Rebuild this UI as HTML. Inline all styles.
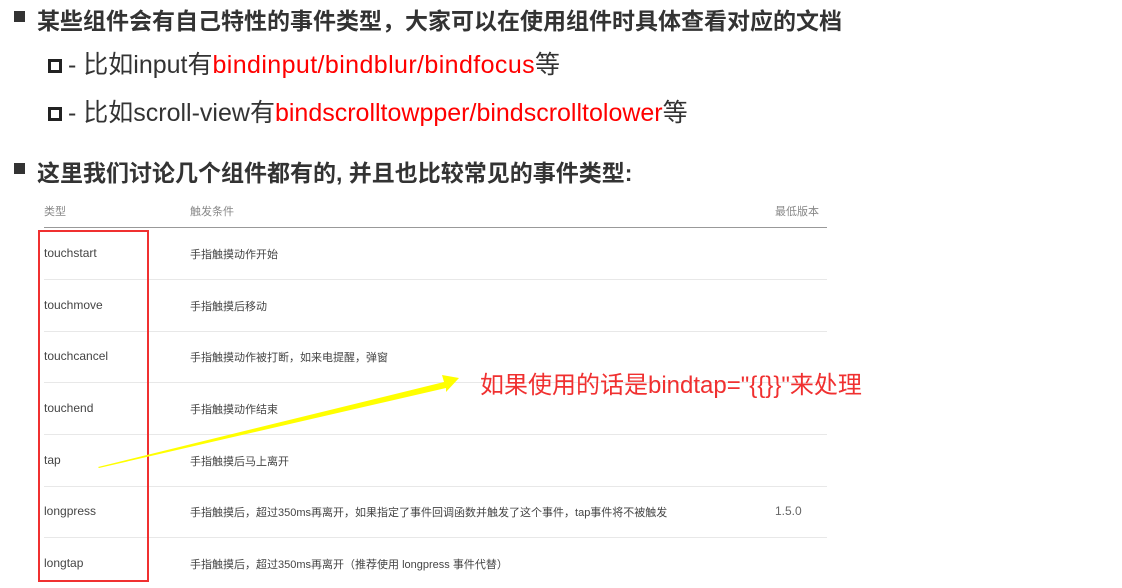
<!DOCTYPE html>
<html><head><meta charset="utf-8"><style>
body{margin:0;width:1122px;height:588px;background:#fff;position:relative;overflow:hidden;font-family:"Liberation Sans","Noto Sans CJK SC",sans-serif;}
.a{position:absolute;white-space:nowrap;}
.h{font-size:23px;font-weight:bold;color:#333;}
.sq{position:absolute;width:11px;height:11px;background:#333;}
.s{font-size:25px;color:#333;}
.r{color:#f00;}
.ob{display:inline-block;border:3px solid #222;vertical-align:0px;margin-right:6px;box-sizing:content-box;width:8px;height:8px;}
.t{font-size:12px;color:#444;}
.c{font-size:11px;color:#444;}
.th{font-size:11px;color:#888;}
.ln{position:absolute;left:44px;width:783px;height:1px;background:#e8e8e8;}
</style></head><body>
<div class="sq" style="left:14px;top:11px"></div>
<div class="a h" style="left:37px;top:2px">某些组件会有自己特性的事件类型，大家可以在使用组件时具体查看对应的文档</div>
<div class="a s" style="left:48px;top:45px"><span class="ob"></span>- 比如input有<span class="r" style="letter-spacing:0.4px">bindinput/bindblur/bindfocus</span>等</div>
<div class="a s" style="left:48px;top:93px"><span class="ob"></span>- 比如scroll-view有<span class="r">bindscrolltowpper/bindscrolltolower</span>等</div>
<div class="sq" style="left:14px;top:163px"></div>
<div class="a h" style="left:37px;top:154px">这里我们讨论几个组件都有的, 并且也比较常见的事件类型:</div>

<div class="a th" style="left:44px;top:203px">类型</div>
<div class="a th" style="left:190px;top:203px">触发条件</div>
<div class="a th" style="left:775px;top:203px">最低版本</div>
<div class="ln" style="top:227px;background:#999"></div>

<div class="a t" style="left:44px;top:246px">touchstart</div><div class="a c" style="left:190px;top:246px">手指触摸动作开始</div>
<div class="ln" style="top:279px"></div>
<div class="a t" style="left:44px;top:298px">touchmove</div><div class="a c" style="left:190px;top:298px">手指触摸后移动</div>
<div class="ln" style="top:331px"></div>
<div class="a t" style="left:44px;top:349px">touchcancel</div><div class="a c" style="left:190px;top:349px">手指触摸动作被打断，如来电提醒，弹窗</div>
<div class="ln" style="top:382px"></div>
<div class="a t" style="left:44px;top:401px">touchend</div><div class="a c" style="left:190px;top:401px">手指触摸动作结束</div>
<div class="ln" style="top:434px"></div>
<div class="a t" style="left:44px;top:453px">tap</div><div class="a c" style="left:190px;top:453px">手指触摸后马上离开</div>
<div class="ln" style="top:486px"></div>
<div class="a t" style="left:44px;top:504px">longpress</div><div class="a c" style="left:190px;top:504px">手指触摸后，超过350ms再离开，如果指定了事件回调函数并触发了这个事件，tap事件将不被触发</div><div class="a t" style="left:775px;top:504px;color:#666">1.5.0</div>
<div class="ln" style="top:537px"></div>
<div class="a t" style="left:44px;top:556px">longtap</div><div class="a c" style="left:190px;top:556px">手指触摸后，超过350ms再离开（推荐使用 longpress 事件代替）</div>

<div style="position:absolute;left:38px;top:230px;width:107px;height:348px;border:2px solid #f03030;"></div>

<svg style="position:absolute;left:0;top:0" width="1122" height="588">
<polygon points="98,467 444,382 442,375 459,378 446,392 446,388 99,468" fill="#ffff00"/>
</svg>
<div class="a" style="left:480px;top:365px;font-size:24px;color:#f03030">如果使用的话是bindtap="{{}}"来处理</div>
</body></html>
